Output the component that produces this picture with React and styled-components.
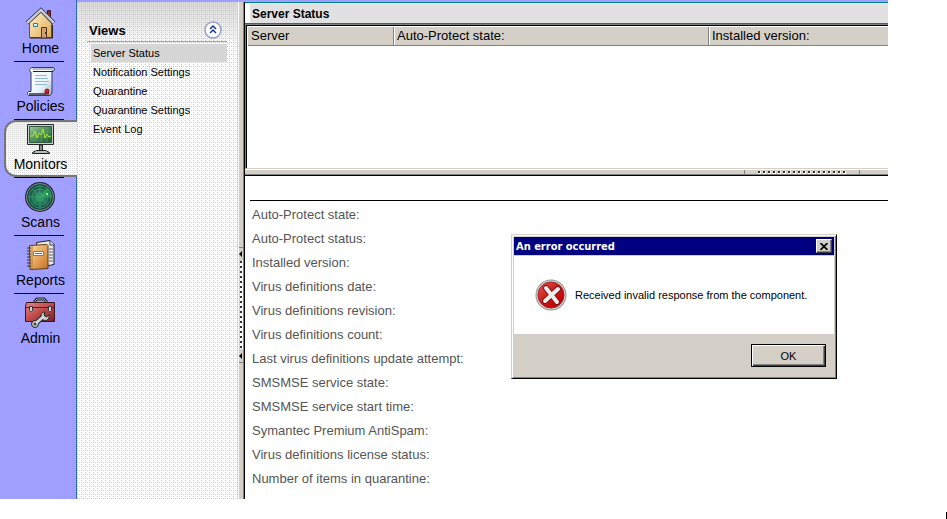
import React, { useState } from 'react';
import styled, { createGlobalStyle } from 'styled-components';

const navItems = [
  { name: 'Home', Icon: HomeIcon },
  { name: 'Policies', Icon: PoliciesIcon },
  { name: 'Monitors', Icon: MonitorsIcon },
  { name: 'Scans', Icon: ScansIcon },
  { name: 'Reports', Icon: ReportsIcon },
  { name: 'Admin', Icon: AdminIcon },
];

const views = [
  'Server Status',
  'Notification Settings',
  'Quarantine',
  'Quarantine Settings',
  'Event Log',
];

const details = [
  'Auto-Protect state:',
  'Auto-Protect status:',
  'Installed version:',
  'Virus definitions date:',
  'Virus definitions revision:',
  'Virus definitions count:',
  'Last virus definitions update attempt:',
  'SMSMSE service state:',
  'SMSMSE service start time:',
  'Symantec Premium AntiSpam:',
  'Virus definitions license status:',
  'Number of items in quarantine:',
];

function App() {
  //state
  const [section, setSection] = useState('Monitors');
  const [view, setView] = useState('Server Status');
  const [viewsOpen, setViewsOpen] = useState(true);
  const [showError, setShowError] = useState(true);

  return (
    <Page>
      <GlobalStyle />
      <Console>
        <Sidebar>
          {navItems.map(({ name, Icon }, i) => (
            <React.Fragment key={name}>
              <NavButton $active={name === section} onClick={() => setSection(name)}>
                <Icon />
                {name}
              </NavButton>
              {i < navItems.length - 1 ? <NavLine /> : null}
            </React.Fragment>
          ))}
        </Sidebar>

        <Workspace>
          <ViewsPanel>
            <ViewsHeader>
              <ViewsTitle>Views</ViewsTitle>
              <CollapseButton aria-label="Collapse" onClick={() => setViewsOpen(!viewsOpen)}>
                <ChevronsIcon />
              </CollapseButton>
            </ViewsHeader>
            {viewsOpen ? (
              <ViewList>
                {views.map((name) => (
                  <li key={name}>
                    <ViewLink href="#" $active={name === view} onClick={() => setView(name)}>
                      {name}
                    </ViewLink>
                  </li>
                ))}
              </ViewList>
            ) : null}
          </ViewsPanel>

          <ColumnSplitter>
            <ColumnGrip>
              <ArrowIcon />
              <ColumnDots />
              <ArrowIcon />
            </ColumnGrip>
          </ColumnSplitter>

          <Main>
            <MainTitle>Server Status</MainTitle>
            <ServerList>
              <ServerTable>
                <thead>
                  <tr>
                    <HeadCell $width="146px">Server</HeadCell>
                    <HeadCell $width="315px">Auto-Protect state:</HeadCell>
                    <HeadCell>Installed version:</HeadCell>
                  </tr>
                </thead>
              </ServerTable>
            </ServerList>
            <RowSplitter>
              <RowGrip>
                <RowDots />
              </RowGrip>
            </RowSplitter>
            <DetailList>
              {details.map((label) => (
                <dt key={label}>{label}</dt>
              ))}
            </DetailList>
          </Main>
        </Workspace>
      </Console>

      {showError ? (
        <Dialog role="alertdialog" aria-labelledby="error-title">
          <DialogTitle>
            <h2 id="error-title">An error occurred</h2>
            <CloseButton aria-label="Close" onClick={() => setShowError(false)}>
              <CloseIcon />
            </CloseButton>
          </DialogTitle>
          <DialogBody>
            <ErrorIcon />
            <p>Received invalid response from the component.</p>
          </DialogBody>
          <DialogFooter>
            <OkButton onClick={() => setShowError(false)}>OK</OkButton>
          </DialogFooter>
        </Dialog>
      ) : null}
      <Caret />
    </Page>
  );
}

export default App;

//icons
function HomeIcon() {
  return (
    <svg width="32" height="32" viewBox="0 0 32 32" aria-hidden="true">
      <defs>
        <linearGradient id="wall" x1="0" y1="0" x2="1" y2="1">
          <stop offset="0" stopColor="#fff3cc" />
          <stop offset="1" stopColor="#dfa950" />
        </linearGradient>
      </defs>
      <path d="M22.500 3.500h3v12h-3z" fill="#99262e" stroke="#401820" />
      <path d="M4.500 15 16 5l10.500 11v14.500h-22z" fill="url(#wall)" stroke="#6b5430" />
      <path d="M27.500 18v13H5" fill="none" stroke="#222" />
      <path d="m2 16 14-13 13 13" fill="none" stroke="#303036" strokeWidth="4" />
      <path d="m2 16 14-13 13 13" fill="none" stroke="#c6c8d2" strokeWidth="2.500" />
      <path d="M8.500 16.500h4v3h-4z" fill="#d8f4ff" stroke="#2878a0" />
      <path d="M16.500 20.500h5V31h-5z" fill="#cda176" stroke="#5b3420" />
      <path d="M20 25h1v2h-1z" fill="#4c2b18" />
    </svg>
  );
}

function PoliciesIcon() {
  return (
    <svg width="32" height="32" viewBox="0 0 32 32" aria-hidden="true">
      <defs>
        <linearGradient id="paper" x1="0" y1="0" x2="1" y2="1">
          <stop offset="0" stopColor="#fff" />
          <stop offset=".6" stopColor="#edf5fb" />
          <stop offset="1" stopColor="#8fa3b8" />
        </linearGradient>
      </defs>
      <path d="M7 2.500h21c2 0 2 3.500 0 3.500h-1v20c0 3-1 4.500-3 4.500H4c-2 0-2-4 0-4h2V7C4 7 4 3 7 2.500z" fill="url(#paper)" stroke="#333c48" />
      <path d="M7 3h21v2H8z" fill="#b9bec6" />
      <path d="M8 6.500h20" fill="none" stroke="#20252d" />
      <path d="M4 28h19v2H4z" fill="#5c6270" />
      <path d="M10 10.500h12M10 13.500h13M10 16.500h14M10 19.500h12" stroke="#8bb9d6" />
      <path d="m20 26-1 4 3-2 2 2v-4z" fill="#831818" />
      <circle cx="22" cy="26" r="2" fill="#c7252c" stroke="#901818" />
    </svg>
  );
}

function MonitorsIcon() {
  return (
    <svg width="32" height="32" viewBox="0 0 32 32" aria-hidden="true">
      <defs>
        <linearGradient id="screen" x1="0" y1="0" x2="1" y2="1">
          <stop offset="0" stopColor="#a4c9a0" />
          <stop offset=".5" stopColor="#4b8d58" />
          <stop offset="1" stopColor="#1d5c34" />
        </linearGradient>
      </defs>
      <path d="M2.500 1.500h26v20h-26z" fill="#c9cec9" stroke="#262b29" />
      <path d="M4.500 3.500h22v16h-22z" fill="url(#screen)" stroke="#345943" />
      <path d="M5 9h21M5 14h21M10 4v15M16 4v15M22 4v15" stroke="#77a477" strokeWidth=".5" />
      <path d="M5 13h3l2-5 2 7 2-5 2 2 2-6 2 9 2-4 2 3 2-1" fill="none" stroke="#a8e83a" />
      <path d="M14.500 22v6h3v-6z" fill="#8b918f" stroke="#202422" />
      <path d="M7.500 30.500v-1l4-2h9l4 2v1z" fill="#8a908d" stroke="#202422" />
      <path d="M10 29h12" stroke="#dfe5e2" />
    </svg>
  );
}

function ScansIcon() {
  return (
    <svg width="32" height="32" viewBox="0 0 32 32" aria-hidden="true">
      <defs>
        <radialGradient id="radar">
          <stop offset="0" stopColor="#36a66b" />
          <stop offset=".55" stopColor="#236b55" />
          <stop offset="1" stopColor="#173e3c" />
        </radialGradient>
      </defs>
      <circle cx="15" cy="16" r="15" fill="#202a30" />
      <circle cx="15" cy="16" r="13.500" fill="url(#radar)" stroke="#84928f" />
      <g fill="none" stroke="#35a26d" strokeWidth=".75">
        <circle cx="15" cy="16" r="4" />
        <circle cx="15" cy="16" r="8" />
        <circle cx="15" cy="16" r="11" />
        <path d="M15 4v24M3 16h24M7 8l16 16M7 24 23 8" />
      </g>
      <path d="M15 16 22 6c3 2 5 6 5 10z" fill="#3cbd68" opacity=".4" />
      <path d="M21 12h2v2h-2z" fill="#8bf47d" />
    </svg>
  );
}

function ReportsIcon() {
  return (
    <svg width="32" height="32" viewBox="0 0 32 32" aria-hidden="true">
      <defs>
        <linearGradient id="cover" x1="0" y1="0" x2="1" y2="1">
          <stop offset="0" stopColor="#ffe0a0" />
          <stop offset="1" stopColor="#c96d1c" />
        </linearGradient>
      </defs>
      <path d="M11.500 3.500 25 1.500l4 4v20L16 28z" fill="#e6e7e9" stroke="#1d1e22" />
      <path d="M25 2v4h4" fill="#fff" stroke="#333" />
      <path d="M24 10h4M24 13h4M24 16h4M24 19h4M24 22h4" stroke="#666" />
      <path d="M4.500 6.500 22 5.500l1 1v23l-18 1z" fill="url(#cover)" stroke="#633916" />
      <path d="M7 7v23" stroke="#b77a32" />
      <path d="M8.500 12.500h10v4h-10z" fill="#fff" stroke="#8a7765" />
      <path d="M10 14.500h7" stroke="#617b96" />
      <path d="M2 9h4M2 12h4M2 15h4M2 18h4M2 21h4M2 24h4M2 27h4" stroke="#3c3028" />
    </svg>
  );
}

function AdminIcon() {
  return (
    <svg width="32" height="32" viewBox="0 0 32 32" aria-hidden="true">
      <defs>
        <linearGradient id="toolbox" x1="0" y1="0" x2="1" y2="1">
          <stop offset="0" stopColor="#e28b88" />
          <stop offset=".5" stopColor="#c04a4c" />
          <stop offset="1" stopColor="#762128" />
        </linearGradient>
      </defs>
      <path d="M10 6V4l2-2h7l2 2v2" fill="none" stroke="#24252a" strokeWidth="3" />
      <path d="M10 6V4l2-2h7l2 2v2" fill="none" stroke="#a9a9ac" />
      <path d="M1.500 5.500h28v19h-29v-15z" fill="url(#toolbox)" stroke="#3b1419" />
      <path d="M1 10.500h28" stroke="#5f1b22" />
      <path d="M4.500 9.500h3v4l-1 1h-1l-1-1zM23.500 9.500h3v4l-1 1h-1l-1-1z" fill="#d0d0d4" stroke="#35353a" />
      <path d="m10 27 9-8" stroke="#222" strokeWidth="5" />
      <circle cx="10" cy="27" r="3.500" fill="#c5c7ca" stroke="#222" />
      <path d="M17 21c-2-4 0-6 3-6l-1 3 2 2 3-2c1 4-3 7-6 5z" fill="#c5c7ca" stroke="#222" />
      <path d="m10 27 9-8" stroke="#d3d5d8" strokeWidth="3" />
      <circle cx="10" cy="27" r="1.500" fill="#444" />
    </svg>
  );
}

function ChevronsIcon() {
  return (
    <svg width="18" height="18" viewBox="0 0 18 18" aria-hidden="true">
      <circle cx="9" cy="9" r="8" fill="#fff" stroke="#9a9ec8" strokeWidth="1.500" />
      <path d="m6 8 3-3 3 3M6 12l3-3 3 3" fill="none" stroke="#163a9c" strokeWidth="1.500" />
    </svg>
  );
}

function ArrowIcon() {
  return (
    <svg width="4" height="6" viewBox="0 0 4 6" aria-hidden="true">
      <path d="M3 0v6L0 3z" fill="#000" />
    </svg>
  );
}

function CloseIcon() {
  return (
    <svg width="8" height="7" viewBox="0 0 8 7" aria-hidden="true">
      <path d="m.500 0 7 7M7.500 0l-7 7" stroke="#000" strokeWidth="1.750" />
    </svg>
  );
}

function ErrorIcon() {
  return (
    <svg width="32" height="32" viewBox="0 0 32 32" aria-hidden="true">
      <defs>
        <linearGradient id="error" x1="0" y1="0" x2="1" y2="1">
          <stop offset="0" stopColor="#e06058" />
          <stop offset=".5" stopColor="#cf1212" />
          <stop offset="1" stopColor="#b80000" />
        </linearGradient>
      </defs>
      <circle cx="16" cy="16" r="15.500" fill="#999" />
      <circle cx="16" cy="16" r="14.500" fill="#cfcfcf" />
      <circle cx="16" cy="16" r="13" fill="url(#error)" stroke="#9b2a2a" />
      <path d="m11 9 11 14M23 10 10 22" stroke="#8c1212" strokeWidth="6" strokeLinecap="round" />
      <path d="m11 9 11 14M23 10 10 22" stroke="#ececec" strokeWidth="4" strokeLinecap="round" />
    </svg>
  );
}

//Styled Component
const GlobalStyle = createGlobalStyle`
  * {
    box-sizing: border-box;
  }

  body {
    margin: 0;
    background-color: #fff;
    color: #000;
    font-family: "Liberation Sans", Arial, sans-serif;
    font-size: 13px;
  }

  button {
    color: inherit;
    cursor: pointer;
    font-family: inherit;
    padding: 0;
  }

  h1, h2, p, ul, dl {
    margin: 0;
    padding: 0;
  }
`;

const Page = styled.div`
  display: flex;
  min-height: 100vh;
  padding: 0 59px 20px 0;
  position: relative;
`;

const Console = styled.div`
  background:
    conic-gradient(from 0deg at 1px 1px, transparent 75%, #9999ff 0) 0 0 / 2px 2px,
    conic-gradient(from 0deg at 1px 1px, transparent 75%, #99a4ee 0) 1px 1px / 2px 2px,
    #8cb4f0;
  display: flex;
  flex: 1;
`;

const Sidebar = styled.nav`
  box-shadow: inset -1px 0 #2c6cac;
  flex: none;
  padding: 4px 0 0 4px;
  width: 77px;
`;

const NavButton = styled.button`
  align-items: center;
  background: ${({ $active }) => ($active
    ? 'conic-gradient(from 0deg at 1px 1px, transparent 75%, #ddd 0) 0 0 / 2px 2px, linear-gradient(#eee, #fff)'
    : 'transparent')};
  border: solid ${({ $active }) => ($active ? '#777' : 'transparent')};
  border-width: 2px 0 2px 2px;
  border-radius: 12px 0 0 12px;
  display: flex;
  flex-direction: column;
  font-size: 14px;
  gap: 1px;
  height: 57px;
  line-height: 16px;
  padding: 1px 2px 0 0;
  width: 100%;
`;

const NavLine = styled.div`
  background-color: #000;
  height: 1px;
  margin-left: 10px;
  width: 50px;
`;

const Workspace = styled.div`
  display: flex;
  flex: 1;
  margin-top: 2px;
`;

const ViewsPanel = styled.aside`
  background:
    linear-gradient(rgba(190, 190, 190, 0.6), rgba(255, 255, 255, 0) 50px),
    conic-gradient(from 0deg at 1px 1px, transparent 75%, #ccc 0) 0 0 / 4px 2px,
    conic-gradient(from 0deg at 1px 1px, transparent 75%, #ccc 0) 2px 0 / 4px 4px,
    #fff;
  border-right: 1px solid #d4d0c8;
  flex: none;
  padding: 19px 10px 0;
  width: 161px;
`;

const ViewsHeader = styled.div`
  align-items: center;
  border-bottom: 1px solid #aca899;
  display: flex;
  height: 21px;
  justify-content: space-between;
  padding: 0 5px 2px 2px;
`;

const ViewsTitle = styled.h2`
  font-size: 13px;
`;

const CollapseButton = styled.button`
  background-color: transparent;
  border: none;
  display: flex;
`;

const ViewList = styled.ul`
  display: grid;
  gap: 1px;
  list-style: none;
  padding: 2px 0 0 4px;
`;

const ViewLink = styled.a`
  background-color: ${({ $active }) => ($active ? '#d6d6d6' : 'transparent')};
  color: #000;
  display: block;
  font-size: 11px;
  line-height: 18px;
  padding-left: 2px;
  text-decoration: none;
`;

const ColumnSplitter = styled.div`
  background-color: #d4d0c8;
  border-left: 1px solid #fff;
  border-right: 1px solid #000;
  box-shadow: inset -1px 0 #808080;
  flex: none;
  padding-top: 245px;
  width: 7px;
`;

const ColumnGrip = styled.div`
  align-items: center;
  border: solid #808080;
  border-width: 1px 0;
  display: flex;
  flex-direction: column;
  height: 116px;
  justify-content: space-between;
  padding: 3px 0;
  width: 4px;
`;

const ColumnDots = styled.div`
  background:
    conic-gradient(from 0deg at 2px 2px, transparent 75%, #333 0) 0 0 / 4px 5px,
    #fff;
  height: 88px;
  width: 3px;
`;

const Main = styled.main`
  background-color: #fff;
  display: flex;
  flex: 1;
  flex-direction: column;
  min-width: 0;
`;

const MainTitle = styled.h1`
  background-color: #e1e1e1;
  border: solid #008080;
  border-width: 1px 0;
  box-shadow: inset 5px 0 #fff;
  font-size: 12px;
  height: 22px;
  line-height: 20px;
  padding: 1px 0 0 7px;
`;

const ServerList = styled.section`
  border-bottom: 1px solid #d4d0c8;
  border-left: 1px solid #808080;
  border-top: 1px solid #808080;
  box-shadow: inset 1px 1px #000;
  height: 145px;
  padding: 2px 0 0 2px;
`;

const ServerTable = styled.table`
  border-collapse: separate;
  border-spacing: 0;
  table-layout: fixed;
  width: 100%;
`;

const HeadCell = styled.th`
  background-color: #d4d0c8;
  border-bottom: 1px solid #808080;
  font-weight: normal;
  height: 19px;
  line-height: 18px;
  padding: 0 0 0 3px;
  text-align: left;
  width: ${({ $width }) => $width || 'auto'};

    & + & {
      box-shadow: inset 1px 0 #fff, -1px 0 #808080;
    }
`;

const RowSplitter = styled.div`
  background-color: #d4d0c8;
  border-bottom: 1px solid #000;
  border-top: 1px solid #fff;
  box-shadow: inset 0 -1px #808080;
  display: flex;
  flex: none;
  height: 7px;
  justify-content: flex-end;
  padding-right: 28px;
`;

const RowGrip = styled.div`
  border: solid #808080;
  border-width: 0 1px;
  height: 4px;
  padding: 1px 13px;
  width: 116px;
`;

const RowDots = styled.div`
  background:
    conic-gradient(from 0deg at 2px 2px, transparent 75%, #333 0) 0 0 / 5px 3px,
    conic-gradient(from 0deg at 3px 3px, transparent 75%, #fff 0) 0 0 / 5px 3px;
  height: 3px;
`;

const DetailList = styled.dl`
  border-top: 1px solid #000;
  color: #555;
  line-height: 24px;
  margin: 24px 0 0 5px;
  padding: 2px 0 0 2px;
`;

const Dialog = styled.section`
  background-color: #d4d0c8;
  border: 1px solid;
  border-color: #d4d0c8 #000 #000 #d4d0c8;
  box-shadow: inset 1px 1px #fff, inset -1px -1px #808080;
  font-size: 11px;
  left: 511px;
  padding: 2px;
  position: absolute;
  top: 234px;
  width: 326px;
`;

const DialogTitle = styled.header`
  align-items: center;
  background-color: #000080;
  color: #fff;
  display: flex;
  height: 18px;
  justify-content: space-between;
  padding: 0 2px;

    > h2 {
      font-family: "DejaVu Sans Condensed", Tahoma, sans-serif;
      font-size: 11px;
    }
`;

const CloseButton = styled.button`
  align-items: center;
  background-color: #d4d0c8;
  border: 1px solid;
  border-color: #fff #404040 #404040 #fff;
  box-shadow: inset -1px -1px #808080;
  color: #000;
  display: flex;
  height: 14px;
  justify-content: center;
  width: 16px;
`;

const DialogBody = styled.div`
  align-items: center;
  background-color: #fff;
  display: flex;
  gap: 8px;
  height: 78px;
  margin-top: 1px;
  padding-left: 21px;
`;

const DialogFooter = styled.footer`
  display: flex;
  height: 42px;
  justify-content: flex-end;
  padding: 10px 8px;
`;

const OkButton = styled.button`
  background-color: #d4d0c8;
  border: 1px solid #000;
  box-shadow: inset 1px 1px #fff, inset -1px -1px #404040, inset -2px -2px #808080;
  font-size: 11px;
  height: 23px;
  width: 75px;
`;

const Caret = styled.div`
  background-color: #000;
  bottom: 0;
  height: 7px;
  position: absolute;
  right: 0;
  width: 1px;
`;
